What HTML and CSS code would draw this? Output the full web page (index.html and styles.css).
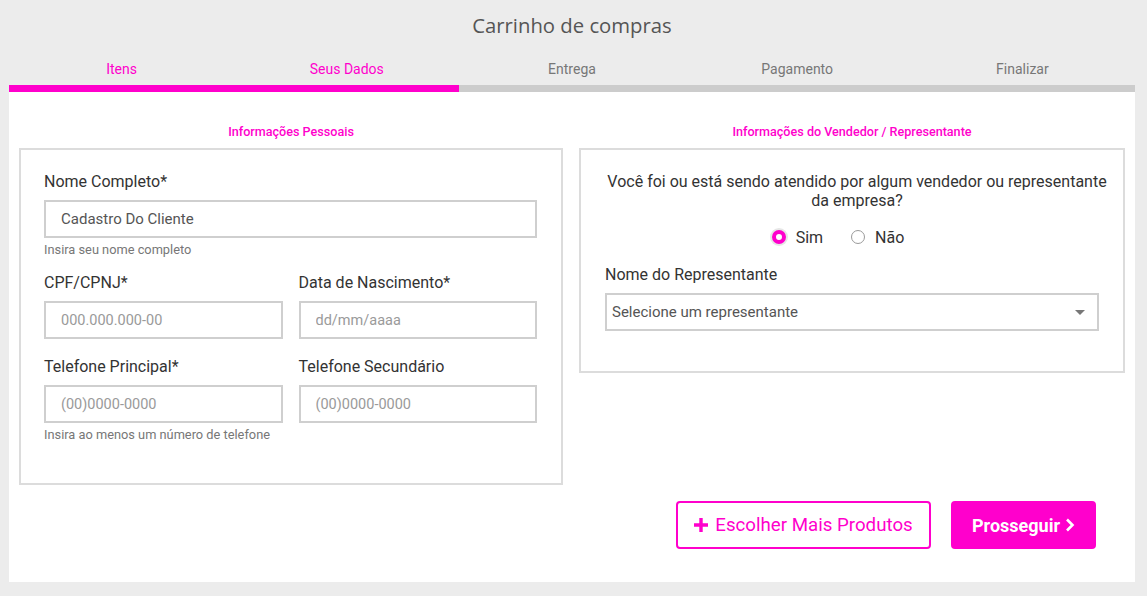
FILE: index.html
```html
<!DOCTYPE html>
<html lang="pt-BR">
<head>
<meta charset="utf-8">
<title>Carrinho de compras</title>
<link rel="stylesheet" href="styles.css">
</head>
<body>
<div class="page">
  <h1 class="title">Carrinho de compras</h1>
  <nav class="steps">
    <div class="step active"><span class="step-label">Itens</span><span class="step-bar"></span></div>
    <div class="step active"><span class="step-label">Seus Dados</span><span class="step-bar"></span></div>
    <div class="step"><span class="step-label">Entrega</span><span class="step-bar"></span></div>
    <div class="step"><span class="step-label">Pagamento</span><span class="step-bar"></span></div>
    <div class="step"><span class="step-label">Finalizar</span><span class="step-bar"></span></div>
  </nav>
  <main class="card">
    <div class="columns">
      <section class="col">
        <h2 class="col-title">Informações Pessoais</h2>
        <div class="panel panel-left">
          <div class="field field-help">
            <label class="label">Nome Completo*</label>
            <input class="input" type="text" value="Cadastro Do Cliente">
            <p class="help">Insira seu nome completo</p>
          </div>
          <div class="pair">
            <div class="field">
              <label class="label">CPF/CPNJ*</label>
              <input class="input" type="text" placeholder="000.000.000-00">
            </div>
            <div class="field">
              <label class="label">Data de Nascimento*</label>
              <input class="input" type="text" placeholder="dd/mm/aaaa">
            </div>
          </div>
          <div class="pair">
            <div class="field">
              <label class="label">Telefone Principal*</label>
              <input class="input" type="text" placeholder="(00)0000-0000">
            </div>
            <div class="field">
              <label class="label">Telefone Secundário</label>
              <input class="input" type="text" placeholder="(00)0000-0000">
            </div>
          </div>
          <p class="help help-last">Insira ao menos um número de telefone</p>
        </div>
      </section>
      <section class="col">
        <h2 class="col-title">Informações do Vendedor / Representante</h2>
        <div class="panel panel-right">
          <p class="question">Você foi ou está sendo atendido por algum vendedor ou representante da empresa?</p>
          <div class="radios">
            <span class="radio"><span class="dot checked"></span>Sim</span>
            <span class="radio"><span class="dot"></span>Não</span>
          </div>
          <div class="field">
            <label class="label">Nome do Representante</label>
            <div class="select">
              <span>Selecione um representante</span>
              <span class="caret"></span>
            </div>
          </div>
        </div>
      </section>
    </div>
    <div class="actions">
      <button class="btn btn-outline" type="button">
        <svg class="plus" width="14" height="14" viewBox="0 0 14 14"><path d="M5.3 0h3.4v5.3H14v3.4H8.7V14H5.3V8.7H0V5.3h5.3z" fill="currentColor"/></svg>
        Escolher Mais Produtos
      </button>
      <button class="btn btn-solid" type="button">
        Prosseguir
        <svg class="chev" width="10" height="14" viewBox="0 0 10 14"><path d="M2 1.5l5.5 5.5L2 12.5" fill="none" stroke="currentColor" stroke-width="2.6"/></svg>
      </button>
    </div>
  </main>
</div>
</body>
</html>
```

FILE: styles.css
```css
* { box-sizing: border-box; }

html, body {
  margin: 0;
  padding: 0;
  background: #ececec;
  font-family: Roboto, "Liberation Sans", Arial, sans-serif;
  color: #333;
}

.page {
  width: 1126px;
  margin-left: 9px;
  padding-bottom: 14px;
}

.title {
  margin: 0;
  height: 50px;
  line-height: 50px;
  text-align: center;
  font-family: "Open Sans", "Liberation Sans", sans-serif;
  font-weight: 400;
  font-size: 20.3px;
  color: #555;
}

.steps {
  display: grid;
  grid-template-columns: repeat(5, 1fr);
}

.step {
  display: flex;
  flex-direction: column;
}

.step-label {
  height: 35px;
  padding-top: 9px;
  line-height: 20px;
  text-align: center;
  font-size: 14px;
  color: #777;
}

.step-bar {
  height: 7px;
  background: #cccccc;
}

.step.active .step-label { color: #ff00cc; }
.step.active .step-bar { background: #ff00cc; }

.card {
  background: #fff;
  padding: 32px 10px 33px 10px;
}

.columns {
  display: grid;
  grid-template-columns: 544px 546px;
  column-gap: 16px;
  align-items: start;
}

.col-title {
  margin: 0 0 8px 0;
  height: 16px;
  line-height: 16px;
  text-align: center;
  font-size: 12.6px;
  font-weight: 500;
  color: #ff00cc;
}

.panel {
  border: 2px solid #dcdcdc;
}

.panel-left {
  padding: 22px 24px 41px 23px;
}

.panel-right {
  padding: 22px 24px 22px 24px;
}

.field {
  margin-bottom: 18px;
}

.field-help {
  margin-bottom: 16px;
}

.label {
  display: block;
  font-size: 16px;
  line-height: 20px;
  color: #333;
  margin-bottom: 8px;
}

.input {
  display: block;
  width: 100%;
  height: 38px;
  border: 2px solid #cfcfcf;
  border-radius: 0;
  padding: 0 15px;
  font-family: Roboto, "Liberation Sans", sans-serif;
  font-size: 15px;
  color: #555;
  background: #fff;
  outline: none;
}

.input::placeholder {
  color: #9a9a9a;
  font-size: 14.5px;
}

.help {
  margin: 5px 0 0 0;
  font-size: 12.8px;
  line-height: 14px;
  color: #777;
}

.help-last {
  margin-top: -13px;
}

.pair {
  display: grid;
  grid-template-columns: 1fr 1fr;
  column-gap: 16px;
}

.question {
  margin: 0 -12px 0 -2px;
  text-align: center;
  font-size: 16px;
  line-height: 19px;
  color: #333;
}

.radios {
  display: flex;
  justify-content: center;
  margin: 17px 0 18px 0;
  height: 20px;
  align-items: center;
}

.radio {
  display: inline-flex;
  align-items: center;
  gap: 10px;
  margin-right: 28px;
  font-size: 16px;
  color: #333;
}

.dot {
  width: 14px;
  height: 14px;
  border-radius: 50%;
  border: 1.5px solid #9a9a9a;
  background: #fff;
}

.dot.checked {
  border: 4px solid #ff00cc;
  background: #fff;
  box-shadow: 0 0 0 2px #e6e6e6;
}

.select {
  display: flex;
  align-items: center;
  justify-content: space-between;
  height: 38px;
  border: 2px solid #cfcfcf;
  padding: 0 12px 0 5px;
  font-size: 15px;
  color: #555;
}

.caret {
  width: 0;
  height: 0;
  border-left: 5px solid transparent;
  border-right: 5px solid transparent;
  border-top: 5px solid #777;
}

.actions {
  display: flex;
  justify-content: flex-end;
  gap: 20px;
  margin-top: 16px;
  padding-right: 29px;
}

.btn {
  height: 48px;
  border-radius: 4px;
  font-family: Roboto, "Liberation Sans", sans-serif;
  font-size: 18px;
  display: inline-flex;
  align-items: center;
  cursor: pointer;
}

.btn-outline {
  width: 255px;
  justify-content: center;
  gap: 7px;
  background: #fff;
  border: 2px solid #ff00cc;
  color: #ff00cc;
  font-size: 18.7px;
}

.btn-solid {
  width: 145px;
  justify-content: center;
  gap: 5px;
  background: #ff00cc;
  border: 2px solid #ff00cc;
  color: #fff;
  font-weight: 700;
}
```
